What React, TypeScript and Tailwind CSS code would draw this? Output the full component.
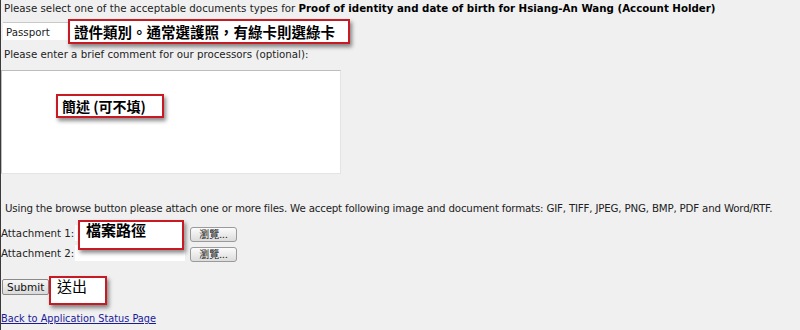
import React from 'react';

const Note: React.FC<{ text: string; className: string }> = ({ text, className }) => (
  <div
    className={`absolute flex items-center whitespace-nowrap bg-white border-2 border-[#c81a22] shadow-[2px_3px_4px_rgba(0,0,0,0.45)] text-black font-bold font-['Noto_Sans_CJK_TC',sans-serif] ${className}`}
  >
    {text}
  </div>
);

const BrowseButton: React.FC = () => (
  <button className="w-[47px] h-[15px] flex items-center justify-center rounded-[3px] border border-[#9a9a9a] bg-gradient-to-b from-[#fbfbfb] to-[#dcdcdc] text-[10px] leading-none text-[#222] font-['Noto_Sans_CJK_TC',sans-serif]">
    瀏覽...
  </button>
);

const App: React.FC = () => {
  return (
    <div className="relative w-[800px] h-[330px] overflow-hidden bg-[#f0f0f0] border-l border-[#3a3a3a] text-[10.25px] leading-[14px] text-[#222] font-['DejaVu_Sans',Verdana,sans-serif]">
      <p className="pl-[3px] pt-[1px] whitespace-nowrap">
        Please select one of the acceptable documents types for{' '}
        <b className="text-black">Proof of identity and date of birth for Hsiang-An Wang (Account Holder)</b>
      </p>

      <div className="mt-[7px] ml-[2px] w-[180px] h-[18px] flex items-center pl-[3px] bg-white border-t border-[#c8c8c8]">
        Passport
      </div>

      <p className="mt-[7px] pl-[3px]">Please enter a brief comment for our processors (optional):</p>

      <div className="mt-[9px] w-[340px] h-[104px] bg-white border-t border-l border-[#bdbdbd] border-r border-r-[#e4e4e4] border-b border-b-[#e4e4e4]" />

      <p className="mt-[27px] pl-[4px] whitespace-nowrap tracking-[-0.18px]">
        Using the browse button please attach one or more files. We accept following image and document formats: GIF, TIFF, JPEG, PNG, BMP, PDF and Word/RTF.
      </p>

      <div className="mt-[10px] flex flex-col gap-[4px]">
        {['Attachment 1:', 'Attachment 2:'].map(label => (
          <div key={label} className="flex items-center h-[16px]">
            <span className="w-[74px] whitespace-nowrap">{label}</span>
            <div className="w-[110px] h-[16px] bg-white" />
            <div className="ml-[5px] mt-[2px]">
              <BrowseButton />
            </div>
          </div>
        ))}
      </div>

      <div className="mt-[18px] ml-[1px]">
        <button className="h-[16px] px-[4px] flex items-center rounded-[2px] border border-[#8a8a8a] bg-gradient-to-b from-[#f6f6f6] to-[#dadada] text-[10.5px] text-[#111]">
          Submit
        </button>
      </div>

      <a href="#" className="block mt-[17px] w-fit text-[9.75px] text-[#1a1a9a] underline">
        Back to Application Status Page
      </a>

      <Note text="證件類別。通常選護照，有綠卡則選綠卡" className="left-[67px] top-[19px] w-[282px] h-[25px] text-[14.5px] pl-[4px]" />
      <Note text="簡述 (可不填)" className="left-[55px] top-[94px] w-[108px] h-[24px] text-[14px] pl-[4px]" />
      <Note text="檔案路徑" className="left-[77px] top-[220px] w-[106px] h-[30px] text-[15px] items-start pt-[1px] pl-[6px]" />
      <Note text="送出" className="left-[48px] top-[276px] w-[58px] h-[29px] text-[15px] font-normal items-start pt-[1px] pl-[6px]" />
    </div>
  );
};

export default App;
